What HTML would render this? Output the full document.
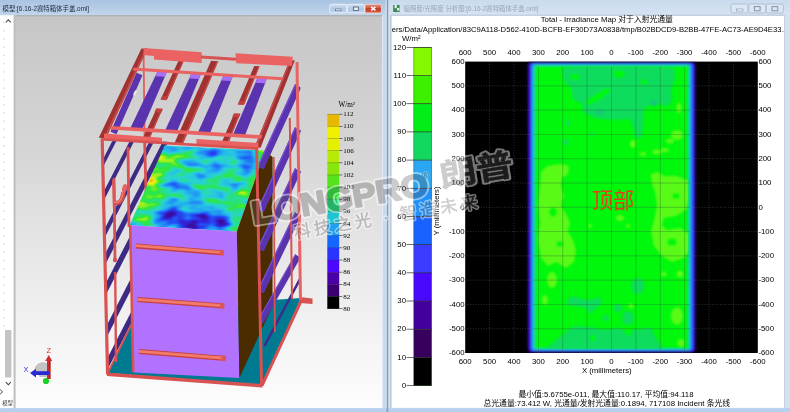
<!DOCTYPE html>
<html lang="zh"><head><meta charset="utf-8"><title>Irradiance Map</title>
<style>
html,body{margin:0;padding:0}
body{width:790px;height:412px;overflow:hidden;position:relative;background:#c3d8ee;font-family:"Liberation Sans", "Noto Sans CJK SC", sans-serif;}
#root{position:absolute;left:0;top:0;width:790px;height:412px;overflow:hidden;filter:blur(0.7px)}
svg{position:absolute;left:0;top:0}
.t{position:absolute;white-space:nowrap;color:#000;font-size:7.8px;line-height:10px;font-family:"Liberation Sans", "Noto Sans CJK SC", sans-serif}
.c{transform:translateX(-50%)}
.r{transform:translateX(-100%)}
</style></head><body><div id="root">

<svg width="790" height="412" viewBox="0 0 790 412">
<defs>
<linearGradient id="vpbg" x1="0" y1="0" x2="0" y2="1">
 <stop offset="0" stop-color="#c6c6c6"/><stop offset="0.35" stop-color="#d6d6d6"/><stop offset="0.7" stop-color="#ededed"/><stop offset="1" stop-color="#fdfdfd"/>
</linearGradient>
<linearGradient id="tbL" x1="0" y1="0" x2="0" y2="1">
 <stop offset="0" stop-color="#a9c3e2"/><stop offset="1" stop-color="#c2d6ec"/>
</linearGradient>
<linearGradient id="tbR" x1="0" y1="0" x2="0" y2="1">
 <stop offset="0" stop-color="#c9dbee"/><stop offset="1" stop-color="#d6e4f2"/>
</linearGradient>
<linearGradient id="redbtn" x1="0" y1="0" x2="0" y2="1">
 <stop offset="0" stop-color="#e59683"/><stop offset="0.45" stop-color="#d4553e"/><stop offset="0.5" stop-color="#c63a24"/><stop offset="1" stop-color="#d65c42"/>
</linearGradient>
<linearGradient id="bluebtn" x1="0" y1="0" x2="0" y2="1">
 <stop offset="0" stop-color="#d2e0f1"/><stop offset="0.5" stop-color="#b2c9e5"/><stop offset="1" stop-color="#bdd1ea"/>
</linearGradient>
<filter id="b1" x="-20%" y="-20%" width="140%" height="140%"><feGaussianBlur stdDeviation="1"/></filter>
<filter id="b2" x="-30%" y="-30%" width="160%" height="160%"><feGaussianBlur stdDeviation="2"/></filter>
<filter id="b3" x="-30%" y="-30%" width="160%" height="160%"><feGaussianBlur stdDeviation="3.2"/></filter>
<filter id="b07" x="-10%" y="-10%" width="120%" height="120%"><feGaussianBlur stdDeviation="0.8"/></filter>
<filter id="b05" x="-10%" y="-10%" width="120%" height="120%"><feGaussianBlur stdDeviation="0.45"/></filter>
</defs>
<rect x="0" y="0" width="387" height="412" fill="url(#tbL)"/>
<rect x="0" y="0" width="387" height="15.3" fill="url(#tbL)"/>
<rect x="0" y="15" width="387" height="397" fill="#c5d9ee"/>
<rect x="387" y="0" width="403" height="412" fill="#d3e2f1"/>
<rect x="387" y="0" width="403" height="15.3" fill="url(#tbR)"/>
<rect x="386.6" y="0" width="1.6" height="412" fill="#8499b3"/>
<rect x="385.6" y="0" width="1" height="412" fill="#d9e6f3"/>
<rect x="0" y="15.3" width="14" height="393" fill="#ffffff"/>
<rect x="13" y="15.3" width="2.6" height="393" fill="#b4b4b4"/><rect x="13" y="15.3" width="1.2" height="393" fill="#e4e4e4"/>
<rect x="15.6" y="15.3" width="366.6" height="393" fill="url(#vpbg)"/>
<rect x="15.6" y="15.3" width="366.6" height="1" fill="#9a9a9a" opacity="0.7"/>
<rect x="382.2" y="15.3" width="0.9" height="393" fill="#e8eef5"/>
<rect x="391.1" y="15.3" width="393.3" height="392.5" fill="#ffffff"/>
<rect x="390.6" y="15" width="0.8" height="393" fill="#8c9fb6" opacity="0.8"/>
<rect x="391.6" y="14.8" width="393" height="0.8" fill="#8c9fb6" opacity="0.7"/>
<rect x="784.2" y="15" width="0.8" height="393" fill="#b9c9da"/>
<rect x="0" y="408.2" width="790" height="4" fill="#b6d1ee"/>
<rect x="386.6" y="408.2" width="1.6" height="4" fill="#8499b3"/>
<clipPath id="vpclip"><rect x="15.6" y="15.3" width="366.6" height="393"/></clipPath>
<g clip-path="url(#vpclip)">
<polygon points="108.0,373.0 131.0,326.0 272.0,300.0 301.0,298.0 262.5,385.5" fill="#007a90" />
<polygon points="300.0,297.0 312.5,298.5 312.5,304.0 300.0,303.0" fill="#d85252" />
<clipPath id="leftwall"><polygon points="102,138 170,142 133,225 133,322 131,326 107.5,374"/></clipPath>
<g clip-path="url(#leftwall)">
<line x1="171.0" y1="30.6" x2="96.0" y2="176.8" stroke="#3c2a84" stroke-width="3.6" />
<line x1="171.0" y1="65.0" x2="96.0" y2="211.2" stroke="#3c2a84" stroke-width="4.0" />
<line x1="171.0" y1="103.9" x2="96.0" y2="250.2" stroke="#3c2a84" stroke-width="4.2" />
<line x1="171.0" y1="131.0" x2="96.0" y2="277.2" stroke="#3c2a84" stroke-width="5.0" />
<line x1="171.0" y1="162.0" x2="96.0" y2="308.2" stroke="#3c2a84" stroke-width="5.3" />
<line x1="171.0" y1="206.0" x2="96.0" y2="352.2" stroke="#3c2a84" stroke-width="5.3" />
<line x1="171.0" y1="240.0" x2="96.0" y2="386.2" stroke="#3c2a84" stroke-width="5.3" />
<line x1="171.0" y1="274.0" x2="96.0" y2="420.2" stroke="#3c2a84" stroke-width="5.3" />
</g>
<line x1="114.0" y1="178.0" x2="115.0" y2="260.0" stroke="#d85252" stroke-width="2.8" />
<circle cx="115" cy="260" r="2.2" fill="#d85252"/>
<line x1="115.2" y1="272.0" x2="116.0" y2="362.0" stroke="#d85252" stroke-width="2.4" />
<line x1="128.0" y1="147.0" x2="129.0" y2="227.0" stroke="#d85252" stroke-width="2.8" />
<line x1="143.6" y1="54.0" x2="144.6" y2="140.0" stroke="#e06060" stroke-width="1.8" />
<line x1="144.6" y1="140.0" x2="146.0" y2="192.0" stroke="#d85252" stroke-width="2.8" />
<line x1="113.6" y1="180.0" x2="114.4" y2="208.0" stroke="#dc5656" stroke-width="3.0" />
<path d="M114 203 L117.5 203 Q122.5 202 123.5 192" stroke="#d24c4c" stroke-width="4.6" fill="none"/>
<path d="M114 202.4 L117.5 202.4 Q121.8 201.4 122.8 192" stroke="#ee7a72" stroke-width="1.6" fill="none"/>
<ellipse cx="124.6" cy="188.4" rx="2.4" ry="4.4" fill="#e46464" transform="rotate(14 124.6 188.4)"/>
<line x1="107.5" y1="373.5" x2="131.0" y2="325.0" stroke="#d85252" stroke-width="1.8" />
<clipPath id="topface"><polygon points="164.6,145.6 265,150.6 236.8,231.6 129.6,225.2"/></clipPath>
<filter id="cmf" filterUnits="userSpaceOnUse" x="118" y="132" width="164" height="110" color-interpolation-filters="sRGB">
<feGaussianBlur in="SourceGraphic" stdDeviation="5" result="bias"/>
<feTurbulence type="fractalNoise" baseFrequency="0.05 0.11" numOctaves="2" seed="11" result="tn"/>
<feColorMatrix in="tn" type="matrix" values="1 0 0 0 0  1 0 0 0 0  1 0 0 0 0  0 0 0 0 1" result="noise"/>
<feComposite in="bias" in2="noise" operator="arithmetic" k1="0" k2="1" k3="0.8" k4="-0.4" result="v"/>
<feComponentTransfer in="v">
<feFuncR type="table" tableValues="0.22 0.19 0.13 0.13 0.14 0.16 0.16 0.19 0.56 0.94 0.94"/><feFuncG type="table" tableValues="0.06 0.16 0.35 0.56 0.72 0.83 0.88 0.91 0.94 0.94 0.69"/><feFuncB type="table" tableValues="0.63 0.88 0.97 0.96 0.93 0.82 0.5 0.22 0.13 0.09 0.06"/>
<feFuncA type="linear" slope="0" intercept="1"/>
</feComponentTransfer>
</filter>
<g clip-path="url(#topface)"><g filter="url(#cmf)">
<rect x="100" y="120" width="200" height="140" fill="#757575"/>
<ellipse cx="150" cy="188" rx="18" ry="44" fill="#adadad"/>
<ellipse cx="138" cy="214" rx="10" ry="10" fill="#b8b8b8"/>
<ellipse cx="172" cy="156" rx="18" ry="9" fill="#adadad"/>
<ellipse cx="160" cy="200" rx="14" ry="10" fill="#999999"/>
<ellipse cx="150" cy="182" rx="7" ry="6" fill="#e0e0e0"/>
<ellipse cx="156" cy="172" rx="6" ry="6" fill="#cccccc"/>
<ellipse cx="262" cy="168" rx="8" ry="22" fill="#b2b2b2"/>
<ellipse cx="248" cy="190" rx="10" ry="10" fill="#c7c7c7"/>
<ellipse cx="254" cy="200" rx="6" ry="12" fill="#a8a8a8"/>
<ellipse cx="243" cy="207" rx="8" ry="6" fill="#9e9e9e"/>
<ellipse cx="224" cy="153" rx="30" ry="4" fill="#3d3d3d"/>
<ellipse cx="202" cy="160" rx="16" ry="3" fill="#4c4c4c"/>
<ellipse cx="196" cy="220" rx="46" ry="8" fill="#1a1a1a"/>
<ellipse cx="205" cy="224" rx="30" ry="6" fill="#000000"/>
<ellipse cx="172" cy="215" rx="16" ry="5" fill="#292929"/>
<ellipse cx="215" cy="184" rx="14" ry="5" fill="#9e9e9e"/>
<ellipse cx="225" cy="203" rx="14" ry="5" fill="#9e9e9e"/>
<ellipse cx="190" cy="172" rx="10" ry="4" fill="#949494"/>
<ellipse cx="190" cy="196" rx="16" ry="4" fill="#616161"/>
<ellipse cx="228" cy="170" rx="12" ry="3" fill="#5c5c5c"/>
<ellipse cx="235" cy="223" rx="6" ry="7" fill="#b8b8b8"/>
<ellipse cx="241" cy="212" rx="5" ry="8" fill="#a8a8a8"/>
</g></g>
<polygon points="129.6,225.2 236.8,231.6 239.4,378.0 133.6,372.6" fill="#b172ff" />
<polygon points="236.8,231.6 265.0,151.0 272.6,157.0 272.6,306.0 239.4,378.0" fill="#4b2c00" />
<line x1="136.0" y1="246.0" x2="220.5" y2="252.7" stroke="#c44040" stroke-width="5.0" />
<line x1="136.0" y1="245.7" x2="220.5" y2="252.4" stroke="#f27a6a" stroke-width="2.8" />
<polygon points="219.5,249.7 223.9,250.0 223.9,255.7 219.5,255.4" fill="#dc5656" />
<line x1="137.5" y1="299.6" x2="221.0" y2="305.8" stroke="#c44040" stroke-width="5.0" />
<line x1="137.5" y1="299.3" x2="221.0" y2="305.5" stroke="#f27a6a" stroke-width="2.8" />
<polygon points="220.0,302.8 224.4,303.1 224.4,308.8 220.0,308.5" fill="#dc5656" />
<line x1="139.0" y1="351.6" x2="222.5" y2="358.3" stroke="#c44040" stroke-width="5.0" />
<line x1="139.0" y1="351.3" x2="222.5" y2="358.0" stroke="#f27a6a" stroke-width="2.8" />
<polygon points="221.5,355.3 225.9,355.6 225.9,361.3 221.5,361.0" fill="#dc5656" />
<line x1="130.2" y1="225.0" x2="133.2" y2="372.0" stroke="#d85252" stroke-width="2.6" />
<clipPath id="rwall"><polygon points="258,100 300,55 303,300 262,386"/></clipPath>
<g clip-path="url(#rwall)">
<line x1="298.0" y1="86.0" x2="260.5" y2="168.0" stroke="#5a34ae" stroke-width="7.0" />
<line x1="295.6" y1="84.2" x2="258.1" y2="166.2" stroke="#7a50d0" stroke-width="1.2" />
<line x1="298.0" y1="129.0" x2="260.5" y2="211.0" stroke="#5a34ae" stroke-width="7.0" />
<line x1="295.6" y1="127.2" x2="258.1" y2="209.2" stroke="#7a50d0" stroke-width="1.2" />
<line x1="298.0" y1="170.0" x2="260.5" y2="250.0" stroke="#5a34ae" stroke-width="7.0" />
<line x1="295.6" y1="168.2" x2="258.1" y2="248.2" stroke="#7a50d0" stroke-width="1.2" />
<line x1="298.0" y1="214.0" x2="260.5" y2="292.0" stroke="#5a34ae" stroke-width="7.0" />
<line x1="295.6" y1="212.2" x2="258.1" y2="290.2" stroke="#7a50d0" stroke-width="1.2" />
<line x1="298.0" y1="256.0" x2="260.5" y2="322.0" stroke="#5a34ae" stroke-width="6.0" />
<line x1="295.6" y1="254.2" x2="258.1" y2="320.2" stroke="#7a50d0" stroke-width="1.2" />
<line x1="300.0" y1="279.0" x2="264.5" y2="346.0" stroke="#3f2c8c" stroke-width="2.6" />
</g>
<line x1="297.0" y1="62.0" x2="300.5" y2="300.0" stroke="#e86464" stroke-width="3" />
<line x1="289.8" y1="118.0" x2="292.0" y2="299.0" stroke="#d85252" stroke-width="2" />
<line x1="273.8" y1="157.0" x2="274.8" y2="332.0" stroke="#d85252" stroke-width="1.8" />
<line x1="102.2" y1="139.0" x2="107.6" y2="374.5" stroke="#d85252" stroke-width="3.2" />
<line x1="256.6" y1="148.0" x2="261.6" y2="385.5" stroke="#d85252" stroke-width="3" />
<line x1="107.0" y1="374.3" x2="262.5" y2="385.8" stroke="#d85252" stroke-width="3.4" />
<line x1="262.0" y1="385.6" x2="301.5" y2="300.0" stroke="#d85252" stroke-width="3" />
<line x1="139.5" y1="74.0" x2="113.5" y2="133.0" stroke="#5a34ae" stroke-width="6.5" />
<ellipse cx="135" cy="93" rx="1.2" ry="3" fill="#e8e8e8" transform="rotate(24 135 93)"/>
<polygon points="158.1,70.2 167.4,70.8 141.9,129.9 129.8,129.2" fill="#5a34ae" />
<polygon points="158.1,70.2 167.4,70.8 164.8,76.8 155.2,76.2" fill="#a870f8" />
<polygon points="192.0,72.4 201.4,73.0 176.8,132.0 164.7,131.3" fill="#5a34ae" />
<polygon points="192.0,72.4 201.4,73.0 198.9,79.0 189.3,78.4" fill="#a870f8" />
<polygon points="224.0,74.5 233.4,75.1 209.7,134.1 197.6,133.3" fill="#5a34ae" />
<polygon points="224.0,74.5 233.4,75.1 231.0,81.1 221.3,80.5" fill="#a870f8" />
<polygon points="258.0,76.8 267.3,77.4 244.7,136.2 232.6,135.5" fill="#5a34ae" />
<polygon points="258.0,76.8 267.3,77.4 265.0,83.3 255.4,82.7" fill="#a870f8" />
<polygon points="178.4,61.0 183.5,61.3 167.1,98.9 161.0,98.5" fill="#a03232" />
<polygon points="182.6,61.2 183.8,61.3 167.1,98.9 165.6,98.8" fill="#c84848" />
<polygon points="155.9,110.1 161.8,110.5 150.2,137.3 143.4,136.9" fill="#a03232" />
<polygon points="160.7,110.4 161.9,110.5 150.1,137.3 148.5,137.2" fill="#c84848" />
<polygon points="162.2,95.8 168.3,96.2 166.5,100.2 160.4,99.8" fill="#c04040" />
<polygon points="156.3,108.3 163.0,108.7 161.2,112.7 154.4,112.3" fill="#c04040" />
<polygon points="254.2,66.0 259.4,66.3 244.4,103.8 238.2,103.4" fill="#a03232" />
<polygon points="258.5,66.3 259.7,66.3 244.4,103.8 242.8,103.7" fill="#c84848" />
<polygon points="233.6,115.0 239.4,115.3 228.9,142.1 222.0,141.7" fill="#a03232" />
<polygon points="238.4,115.3 239.6,115.4 228.7,142.1 227.1,142.0" fill="#c84848" />
<polygon points="239.4,100.7 245.5,101.1 243.8,105.1 237.7,104.7" fill="#c04040" />
<polygon points="233.9,113.2 240.6,113.6 239.0,117.6 232.2,117.2" fill="#c04040" />
<polygon points="211.1,60.8 218.0,61.3 182.5,144.8 174.0,144.3" fill="#a03232" />
<polygon points="216.9,61.2 218.4,61.3 182.5,144.8 180.6,144.6" fill="#c84848" />
<polygon points="141.4,48.4 147.4,48.8 106.0,138.3 98.8,137.8" fill="#a03232" />
<polygon points="145.7,48.6 147.2,48.8 105.6,138.2 103.7,138.1" fill="#cc4c4c" />
<polygon points="289.7,60.1 294.8,60.4 260.5,147.7 254.5,147.3" fill="#a03232" />
<polygon points="289.9,60.1 291.1,60.2 256.4,147.4 254.8,147.3" fill="#cc4c4c" />
<polygon points="133.8,67.5 283.2,77.3 282.0,80.2 132.5,70.4" fill="#ea6262" />
<polygon points="111.9,125.9 262.4,135.2 261.0,138.8 110.3,129.5" fill="#ea6262" />
<polygon points="143.5,48.0 201.7,52.2 201.7,63.0 154.0,59.6 154.0,56.0 143.5,55.0" fill="#ea6262" />
<polygon points="235.5,53.2 292.8,56.8 292.0,66.0 236.2,63.2" fill="#ea6262" />
<line x1="201.0" y1="57.0" x2="236.0" y2="59.2" stroke="#d85252" stroke-width="3" />
<polygon points="104.0,133.6 162.0,137.8 162.0,143.0 104.0,140.2" fill="#ea6262" />
<polygon points="196.5,139.0 258.5,143.0 258.5,149.6 196.5,145.6" fill="#ea6262" />
<line x1="101.0" y1="139.3" x2="258.0" y2="148.6" stroke="#d85252" stroke-width="2.6" />
</g>
<rect x="327.3" y="114.20" width="11.9" height="12.45" fill="#e8b800"/>
<rect x="327.3" y="126.35" width="11.9" height="12.45" fill="#f0f000"/>
<rect x="327.3" y="138.50" width="11.9" height="12.45" fill="#e4f000"/>
<rect x="327.3" y="150.65" width="11.9" height="12.45" fill="#b8ea08"/>
<rect x="327.3" y="162.80" width="11.9" height="12.45" fill="#88e60c"/>
<rect x="327.3" y="174.95" width="11.9" height="12.45" fill="#54e41c"/>
<rect x="327.3" y="187.10" width="11.9" height="12.45" fill="#22e22e"/>
<rect x="327.3" y="199.25" width="11.9" height="12.45" fill="#14d66e"/>
<rect x="327.3" y="211.40" width="11.9" height="12.45" fill="#20c4d0"/>
<rect x="327.3" y="223.55" width="11.9" height="12.45" fill="#22a0f0"/>
<rect x="327.3" y="235.70" width="11.9" height="12.45" fill="#1466ff"/>
<rect x="327.3" y="247.85" width="11.9" height="12.45" fill="#2a34ff"/>
<rect x="327.3" y="260.00" width="11.9" height="12.45" fill="#4c08ff"/>
<rect x="327.3" y="272.15" width="11.9" height="12.45" fill="#4a00a8"/>
<rect x="327.3" y="284.30" width="11.9" height="12.45" fill="#3a0070"/>
<rect x="327.3" y="296.45" width="11.9" height="12.45" fill="#000000"/>
<rect x="327.3" y="113.90" width="11.9" height="0.6" fill="#333" opacity="0.45"/>
<rect x="339.2" y="113.90" width="3.2" height="0.6" fill="#222"/>
<rect x="327.3" y="126.05" width="11.9" height="0.6" fill="#333" opacity="0.45"/>
<rect x="339.2" y="126.05" width="3.2" height="0.6" fill="#222"/>
<rect x="327.3" y="138.20" width="11.9" height="0.6" fill="#333" opacity="0.45"/>
<rect x="339.2" y="138.20" width="3.2" height="0.6" fill="#222"/>
<rect x="327.3" y="150.35" width="11.9" height="0.6" fill="#333" opacity="0.45"/>
<rect x="339.2" y="150.35" width="3.2" height="0.6" fill="#222"/>
<rect x="327.3" y="162.50" width="11.9" height="0.6" fill="#333" opacity="0.45"/>
<rect x="339.2" y="162.50" width="3.2" height="0.6" fill="#222"/>
<rect x="327.3" y="174.65" width="11.9" height="0.6" fill="#333" opacity="0.45"/>
<rect x="339.2" y="174.65" width="3.2" height="0.6" fill="#222"/>
<rect x="327.3" y="186.80" width="11.9" height="0.6" fill="#333" opacity="0.45"/>
<rect x="339.2" y="186.80" width="3.2" height="0.6" fill="#222"/>
<rect x="327.3" y="198.95" width="11.9" height="0.6" fill="#333" opacity="0.45"/>
<rect x="339.2" y="198.95" width="3.2" height="0.6" fill="#222"/>
<rect x="327.3" y="211.10" width="11.9" height="0.6" fill="#333" opacity="0.45"/>
<rect x="339.2" y="211.10" width="3.2" height="0.6" fill="#222"/>
<rect x="327.3" y="223.25" width="11.9" height="0.6" fill="#333" opacity="0.45"/>
<rect x="339.2" y="223.25" width="3.2" height="0.6" fill="#222"/>
<rect x="327.3" y="235.40" width="11.9" height="0.6" fill="#333" opacity="0.45"/>
<rect x="339.2" y="235.40" width="3.2" height="0.6" fill="#222"/>
<rect x="327.3" y="247.55" width="11.9" height="0.6" fill="#333" opacity="0.45"/>
<rect x="339.2" y="247.55" width="3.2" height="0.6" fill="#222"/>
<rect x="327.3" y="259.70" width="11.9" height="0.6" fill="#333" opacity="0.45"/>
<rect x="339.2" y="259.70" width="3.2" height="0.6" fill="#222"/>
<rect x="327.3" y="271.85" width="11.9" height="0.6" fill="#333" opacity="0.45"/>
<rect x="339.2" y="271.85" width="3.2" height="0.6" fill="#222"/>
<rect x="327.3" y="284.00" width="11.9" height="0.6" fill="#333" opacity="0.45"/>
<rect x="339.2" y="284.00" width="3.2" height="0.6" fill="#222"/>
<rect x="327.3" y="296.15" width="11.9" height="0.6" fill="#333" opacity="0.45"/>
<rect x="339.2" y="296.15" width="3.2" height="0.6" fill="#222"/>
<rect x="327.3" y="308.30" width="11.9" height="0.6" fill="#333" opacity="0.45"/>
<rect x="339.2" y="308.30" width="3.2" height="0.6" fill="#222"/>
<rect x="413.8" y="47.40" width="17.8" height="28.48" fill="#84f800"/>
<rect x="413.8" y="75.58" width="17.8" height="28.48" fill="#3cf000"/>
<rect x="413.8" y="103.77" width="17.8" height="28.48" fill="#02ee18"/>
<rect x="413.8" y="131.95" width="17.8" height="28.48" fill="#12d860"/>
<rect x="413.8" y="160.13" width="17.8" height="28.48" fill="#2aa6f2"/>
<rect x="413.8" y="188.32" width="17.8" height="28.48" fill="#2090f8"/>
<rect x="413.8" y="216.50" width="17.8" height="28.48" fill="#1a62ff"/>
<rect x="413.8" y="244.68" width="17.8" height="28.48" fill="#3a3cff"/>
<rect x="413.8" y="272.87" width="17.8" height="28.48" fill="#4a08ff"/>
<rect x="413.8" y="301.05" width="17.8" height="28.48" fill="#42009c"/>
<rect x="413.8" y="329.23" width="17.8" height="28.48" fill="#36005c"/>
<rect x="413.8" y="357.42" width="17.8" height="28.48" fill="#000000"/>
<rect x="406.6" y="47.00" width="25.0" height="0.7" fill="#333"/>
<rect x="406.6" y="75.18" width="25.0" height="0.7" fill="#333"/>
<rect x="406.6" y="103.37" width="25.0" height="0.7" fill="#333"/>
<rect x="406.6" y="131.55" width="25.0" height="0.7" fill="#333"/>
<rect x="406.6" y="159.73" width="25.0" height="0.7" fill="#333"/>
<rect x="406.6" y="187.92" width="25.0" height="0.7" fill="#333"/>
<rect x="406.6" y="216.10" width="25.0" height="0.7" fill="#333"/>
<rect x="406.6" y="244.28" width="25.0" height="0.7" fill="#333"/>
<rect x="406.6" y="272.47" width="25.0" height="0.7" fill="#333"/>
<rect x="406.6" y="300.65" width="25.0" height="0.7" fill="#333"/>
<rect x="406.6" y="328.83" width="25.0" height="0.7" fill="#333"/>
<rect x="406.6" y="357.02" width="25.0" height="0.7" fill="#333"/>
<rect x="406.6" y="385.20" width="25.0" height="0.7" fill="#333"/>
<rect x="413.8" y="47.4" width="17.8" height="338.2" fill="none" stroke="#1a3a10" stroke-width="0.6" opacity="0.7"/>
<rect x="465.2" y="61.6" width="292.6" height="291.4" fill="#000"/>
<clipPath id="plotclip"><rect x="465.2" y="61.6" width="292.6" height="291.4"/></clipPath>
<g clip-path="url(#plotclip)">
<g filter="url(#b1)">
<rect x="527.2" y="61.8" width="169.0" height="290.8" rx="4.0" fill="#1e0040"/>
<rect x="528.4" y="62.4" width="166.6" height="289.6" rx="3.5" fill="#4000b0"/>
<rect x="529.6" y="63.0" width="164.2" height="288.4" rx="3.0" fill="#3818f8"/>
<rect x="530.8" y="63.6" width="161.8" height="287.2" rx="2.6" fill="#2060ff"/>
<rect x="532.0" y="64.2" width="159.4" height="286.0" rx="2.1" fill="#20a0f8"/>
<rect x="533.2" y="64.8" width="157.0" height="284.8" rx="1.6" fill="#18c8c0"/>
<rect x="534.4" y="65.4" width="154.6" height="283.6" rx="1.1" fill="#10e050"/>
<rect x="535.6" y="66.0" width="152.2" height="282.4" rx="1.0" fill="#00f808"/>
</g>
<clipPath id="gclip"><rect x="535.2" y="66.3" width="153.0" height="282.3" rx="2"/></clipPath>
<g clip-path="url(#gclip)" filter="url(#b07)">
<polygon points="562,69 575,66 612,66 640,66 674,68 675,80 671,88 672,100 668,106 655,104 644,108 643,120 642,136 636,139 633,126 630,119 612,120 595,118 584,113 582,104 573,99 571,88 565,82" fill="#0cdc5c"/>
<ellipse cx="619" cy="74" rx="6" ry="4" fill="#00f808"/>
<ellipse cx="644" cy="82" rx="3" ry="3" fill="#00f808"/>
<ellipse cx="575" cy="77" rx="5" ry="3" fill="#00f808"/>
<polygon points="585,103 590,98 598,93 606,88 611,90 606,95 598,101 589,105" fill="#00f808"/>
<ellipse cx="654" cy="103" rx="3" ry="3" fill="#14c67a"/>
<ellipse cx="600" cy="112" rx="4" ry="2.5" fill="#14c67a"/>
<ellipse cx="568" cy="123" rx="2" ry="3" fill="#0cdc5c"/>
<ellipse cx="566" cy="142" rx="2.5" ry="3" fill="#0cdc5c"/>
<ellipse cx="592" cy="134" rx="2" ry="2" fill="#0cdc5c"/>
<ellipse cx="679" cy="108" rx="2.5" ry="5" fill="#58fa14"/>
<ellipse cx="677" cy="135" rx="6" ry="5" fill="#58fa14"/>
<ellipse cx="670" cy="141" rx="4" ry="2.5" fill="#58fa14"/>
<ellipse cx="633" cy="144" rx="3" ry="4" fill="#58fa14"/>
<ellipse cx="657" cy="152" rx="5" ry="2.5" fill="#58fa14"/>
<ellipse cx="643" cy="154" rx="3" ry="2" fill="#58fa14"/>
<ellipse cx="665" cy="150" rx="4" ry="2" fill="#58fa14"/>
<polygon points="541,172 547,166 560,164 569,166 568,174 562,178 561,186 564,196 561,206 566,214 570,222 568,232 573,240 576,250 574,262 566,268 556,262 548,266 541,258 538,240 540,222 538,204 540,188" fill="#58fa14"/>
<ellipse cx="552" cy="280" rx="5" ry="8" fill="#58fa14"/>
<ellipse cx="545" cy="300" rx="3" ry="5" fill="#58fa14"/>
<ellipse cx="553" cy="212" rx="4" ry="5" fill="#00f808"/>
<ellipse cx="560" cy="244" rx="4" ry="3" fill="#00f808"/>
<polygon points="651,174 658,172 664,176 676,176 688,180 690,196 686,210 676,216 664,218 662,226 668,230 680,228 690,234 690,250 684,258 672,262 662,256 654,246 651,232 654,220 657,206 655,192 652,184" fill="#58fa14"/>
<ellipse cx="676" cy="196" rx="4" ry="3" fill="#00f808"/>
<ellipse cx="672" cy="242" rx="5" ry="4" fill="#00f808"/>
<ellipse cx="620" cy="218" rx="4" ry="3" fill="#58fa14"/>
<ellipse cx="628" cy="226" rx="2" ry="2" fill="#58fa14"/>
<ellipse cx="590" cy="226" rx="2" ry="2" fill="#58fa14"/>
<ellipse cx="680" cy="274" rx="3.5" ry="3.5" fill="#58fa14"/>
<ellipse cx="664" cy="274" rx="2.5" ry="2.5" fill="#58fa14"/>
<ellipse cx="677" cy="316" rx="6" ry="9" fill="#58fa14"/>
<ellipse cx="681" cy="343" rx="3.5" ry="4" fill="#58fa14"/>
<ellipse cx="631" cy="306" rx="2.5" ry="2.5" fill="#58fa14"/>
<polygon points="545,349 556,340 566,332 574,326 590,327 604,330 618,328 628,331 640,329 651,328 656,338 663,349" fill="#0cdc5c"/>
<polygon points="567,300 574,296 584,300 594,299 600,297 602,304 596,308 590,314 586,308 576,306 569,306" fill="#0cdc5c"/>
<ellipse cx="638" cy="286" rx="6.5" ry="8" fill="#0cdc5c"/>
<ellipse cx="618" cy="308" rx="4" ry="4" fill="#0cdc5c"/>
<ellipse cx="628" cy="318" rx="6" ry="7" fill="#0cdc5c"/>
<ellipse cx="606" cy="318" rx="3" ry="3" fill="#0cdc5c"/>
<ellipse cx="628" cy="332" rx="3.5" ry="3.5" fill="#00f808"/>
<ellipse cx="593" cy="338" rx="3" ry="3" fill="#00f808"/>
</g>
<line x1="733.42" y1="61.6" x2="733.42" y2="353.0" stroke="#8a8a8a" stroke-width="0.7" stroke-dasharray="1 1.6" opacity="0.5"/>
<line x1="465.2" y1="328.72" x2="757.8" y2="328.72" stroke="#8a8a8a" stroke-width="0.7" stroke-dasharray="1 1.6" opacity="0.5"/>
<line x1="709.03" y1="61.6" x2="709.03" y2="353.0" stroke="#8a8a8a" stroke-width="0.7" stroke-dasharray="1 1.6" opacity="0.5"/>
<line x1="465.2" y1="304.43" x2="757.8" y2="304.43" stroke="#8a8a8a" stroke-width="0.7" stroke-dasharray="1 1.6" opacity="0.5"/>
<line x1="684.65" y1="61.6" x2="684.65" y2="353.0" stroke="#8a8a8a" stroke-width="0.7" stroke-dasharray="1 1.6" opacity="0.5"/>
<line x1="465.2" y1="280.15" x2="757.8" y2="280.15" stroke="#8a8a8a" stroke-width="0.7" stroke-dasharray="1 1.6" opacity="0.5"/>
<line x1="660.27" y1="61.6" x2="660.27" y2="353.0" stroke="#8a8a8a" stroke-width="0.7" stroke-dasharray="1 1.6" opacity="0.5"/>
<line x1="465.2" y1="255.87" x2="757.8" y2="255.87" stroke="#8a8a8a" stroke-width="0.7" stroke-dasharray="1 1.6" opacity="0.5"/>
<line x1="635.88" y1="61.6" x2="635.88" y2="353.0" stroke="#8a8a8a" stroke-width="0.7" stroke-dasharray="1 1.6" opacity="0.5"/>
<line x1="465.2" y1="231.58" x2="757.8" y2="231.58" stroke="#8a8a8a" stroke-width="0.7" stroke-dasharray="1 1.6" opacity="0.5"/>
<line x1="611.50" y1="61.6" x2="611.50" y2="353.0" stroke="#8a8a8a" stroke-width="0.7" stroke-dasharray="1 1.6" opacity="0.5"/>
<line x1="465.2" y1="207.30" x2="757.8" y2="207.30" stroke="#8a8a8a" stroke-width="0.7" stroke-dasharray="1 1.6" opacity="0.5"/>
<line x1="587.12" y1="61.6" x2="587.12" y2="353.0" stroke="#8a8a8a" stroke-width="0.7" stroke-dasharray="1 1.6" opacity="0.5"/>
<line x1="465.2" y1="183.02" x2="757.8" y2="183.02" stroke="#8a8a8a" stroke-width="0.7" stroke-dasharray="1 1.6" opacity="0.5"/>
<line x1="562.73" y1="61.6" x2="562.73" y2="353.0" stroke="#8a8a8a" stroke-width="0.7" stroke-dasharray="1 1.6" opacity="0.5"/>
<line x1="465.2" y1="158.73" x2="757.8" y2="158.73" stroke="#8a8a8a" stroke-width="0.7" stroke-dasharray="1 1.6" opacity="0.5"/>
<line x1="538.35" y1="61.6" x2="538.35" y2="353.0" stroke="#8a8a8a" stroke-width="0.7" stroke-dasharray="1 1.6" opacity="0.5"/>
<line x1="465.2" y1="134.45" x2="757.8" y2="134.45" stroke="#8a8a8a" stroke-width="0.7" stroke-dasharray="1 1.6" opacity="0.5"/>
<line x1="513.97" y1="61.6" x2="513.97" y2="353.0" stroke="#8a8a8a" stroke-width="0.7" stroke-dasharray="1 1.6" opacity="0.5"/>
<line x1="465.2" y1="110.17" x2="757.8" y2="110.17" stroke="#8a8a8a" stroke-width="0.7" stroke-dasharray="1 1.6" opacity="0.5"/>
<line x1="489.58" y1="61.6" x2="489.58" y2="353.0" stroke="#8a8a8a" stroke-width="0.7" stroke-dasharray="1 1.6" opacity="0.5"/>
<line x1="465.2" y1="85.88" x2="757.8" y2="85.88" stroke="#8a8a8a" stroke-width="0.7" stroke-dasharray="1 1.6" opacity="0.5"/>
<line x1="684.65" y1="66.8" x2="684.65" y2="352.6" stroke="#0a5a14" stroke-width="0.7" opacity="0.36"/>
<line x1="660.27" y1="66.8" x2="660.27" y2="352.6" stroke="#0a5a14" stroke-width="0.7" opacity="0.36"/>
<line x1="635.88" y1="66.8" x2="635.88" y2="352.6" stroke="#0a5a14" stroke-width="0.7" opacity="0.36"/>
<line x1="611.50" y1="66.8" x2="611.50" y2="352.6" stroke="#0a5a14" stroke-width="0.7" opacity="0.36"/>
<line x1="587.12" y1="66.8" x2="587.12" y2="352.6" stroke="#0a5a14" stroke-width="0.7" opacity="0.36"/>
<line x1="562.73" y1="66.8" x2="562.73" y2="352.6" stroke="#0a5a14" stroke-width="0.7" opacity="0.36"/>
<line x1="538.35" y1="66.8" x2="538.35" y2="352.6" stroke="#0a5a14" stroke-width="0.7" opacity="0.36"/>
<line x1="533.2" y1="328.72" x2="690.2" y2="328.72" stroke="#0a5a14" stroke-width="0.7" opacity="0.36"/>
<line x1="533.2" y1="304.43" x2="690.2" y2="304.43" stroke="#0a5a14" stroke-width="0.7" opacity="0.36"/>
<line x1="533.2" y1="280.15" x2="690.2" y2="280.15" stroke="#0a5a14" stroke-width="0.7" opacity="0.36"/>
<line x1="533.2" y1="255.87" x2="690.2" y2="255.87" stroke="#0a5a14" stroke-width="0.7" opacity="0.36"/>
<line x1="533.2" y1="231.58" x2="690.2" y2="231.58" stroke="#0a5a14" stroke-width="0.7" opacity="0.36"/>
<line x1="533.2" y1="207.30" x2="690.2" y2="207.30" stroke="#0a5a14" stroke-width="0.7" opacity="0.36"/>
<line x1="533.2" y1="183.02" x2="690.2" y2="183.02" stroke="#0a5a14" stroke-width="0.7" opacity="0.36"/>
<line x1="533.2" y1="158.73" x2="690.2" y2="158.73" stroke="#0a5a14" stroke-width="0.7" opacity="0.36"/>
<line x1="533.2" y1="134.45" x2="690.2" y2="134.45" stroke="#0a5a14" stroke-width="0.7" opacity="0.36"/>
<line x1="533.2" y1="110.17" x2="690.2" y2="110.17" stroke="#0a5a14" stroke-width="0.7" opacity="0.36"/>
<line x1="533.2" y1="85.88" x2="690.2" y2="85.88" stroke="#0a5a14" stroke-width="0.7" opacity="0.36"/>
</g>
<rect x="329.8" y="4.3" width="17" height="8.6" rx="1.5" fill="url(#bluebtn)" stroke="#f2f7fc" stroke-width="0.8"/>
<rect x="347.4" y="4.3" width="17" height="8.6" rx="1.5" fill="url(#bluebtn)" stroke="#f2f7fc" stroke-width="0.8"/>
<rect x="365" y="4.3" width="16.4" height="8.6" rx="1.5" fill="url(#redbtn)" stroke="#f6d9d2" stroke-width="0.8"/>
<rect x="335.4" y="9" width="5.6" height="1.8" fill="#f8fbff" stroke="#56657a" stroke-width="0.6"/>
<rect x="353.4" y="7" width="5" height="3.4" fill="#e8f0f8" stroke="#56657a" stroke-width="0.9"/>
<path d="M371.2 6.9 L375.4 10.4 M375.4 6.9 L371.2 10.4" stroke="#ffffff" stroke-width="1.5" fill="none"/>
<rect x="731" y="4" width="17" height="9" rx="1.5" fill="#dbe7f4" stroke="#a9b6c6" stroke-width="0.8"/>
<rect x="748.7" y="4" width="17" height="9" rx="1.5" fill="#dbe7f4" stroke="#a9b6c6" stroke-width="0.8"/>
<rect x="766.3" y="4" width="17" height="9" rx="1.5" fill="#dbe7f4" stroke="#a9b6c6" stroke-width="0.8"/>
<rect x="736.5" y="9" width="6.5" height="2" fill="#f8fbff" stroke="#8490a0" stroke-width="0.6"/>
<rect x="754.3" y="6.6" width="5.8" height="4.2" fill="none" stroke="#8490a0" stroke-width="1"/>
<rect x="772" y="6.6" width="5.8" height="4.2" fill="none" stroke="#8490a0" stroke-width="1"/>
<rect x="393.2" y="5" width="6.4" height="7" fill="#3a8a52"/>
<rect x="394.6" y="5" width="2.2" height="3.2" fill="#e8f2ee"/>
<rect x="397" y="8" width="2.4" height="2.6" fill="#dfe8f2"/>
<rect x="5" y="330" width="6.4" height="47.4" rx="1" fill="#c4c4c4"/>
<path d="M5.8 22.4 L8.3 19.8 L10.8 22.4" stroke="#555" stroke-width="1.1" fill="none"/>
<path d="M5.8 382.2 L8.3 384.8 L10.8 382.2" stroke="#444" stroke-width="1.1" fill="none"/>
<path d="M0.2 389.6 L2.6 391.8 L0.2 394" stroke="#444" stroke-width="1" fill="none"/>
<rect x="3" y="22.0" width="1.3" height="1.3" fill="#7fd48a" opacity="0.6"/>
<rect x="3" y="30.2" width="1.3" height="1.3" fill="#7fd48a" opacity="0.6"/>
<rect x="3" y="38.4" width="1.3" height="1.3" fill="#7fd48a" opacity="0.6"/>
<rect x="3" y="46.6" width="1.3" height="1.3" fill="#7fd48a" opacity="0.6"/>
<rect x="3" y="54.8" width="1.3" height="1.3" fill="#7fd48a" opacity="0.6"/>
<rect x="3" y="63.0" width="1.3" height="1.3" fill="#7fd48a" opacity="0.6"/>
<rect x="3" y="71.2" width="1.3" height="1.3" fill="#7fd48a" opacity="0.6"/>
<rect x="3" y="79.4" width="1.3" height="1.3" fill="#7fd48a" opacity="0.6"/>
<rect x="3" y="87.6" width="1.3" height="1.3" fill="#7fd48a" opacity="0.6"/>
<rect x="3" y="95.8" width="1.3" height="1.3" fill="#7fd48a" opacity="0.6"/>
<rect x="3" y="104.0" width="1.3" height="1.3" fill="#7fd48a" opacity="0.6"/>
<rect x="3" y="112.2" width="1.3" height="1.3" fill="#7fd48a" opacity="0.6"/>
<rect x="3" y="120.4" width="1.3" height="1.3" fill="#7fd48a" opacity="0.6"/>
<rect x="3" y="128.6" width="1.3" height="1.3" fill="#7fd48a" opacity="0.6"/>
<rect x="3" y="136.8" width="1.3" height="1.3" fill="#7fd48a" opacity="0.6"/>
<rect x="3" y="145.0" width="1.3" height="1.3" fill="#7fd48a" opacity="0.6"/>
<rect x="3" y="153.2" width="1.3" height="1.3" fill="#7fd48a" opacity="0.6"/>
<rect x="3" y="161.4" width="1.3" height="1.3" fill="#7fd48a" opacity="0.6"/>
<rect x="3" y="169.6" width="1.3" height="1.3" fill="#7fd48a" opacity="0.6"/>
<rect x="3" y="177.8" width="1.3" height="1.3" fill="#7fd48a" opacity="0.6"/>
<rect x="3" y="186.0" width="1.3" height="1.3" fill="#7fd48a" opacity="0.6"/>
<rect x="3" y="194.2" width="1.3" height="1.3" fill="#7fd48a" opacity="0.6"/>
<rect x="3" y="202.4" width="1.3" height="1.3" fill="#7fd48a" opacity="0.6"/>
<rect x="3" y="210.6" width="1.3" height="1.3" fill="#7fd48a" opacity="0.6"/>
<rect x="3" y="218.8" width="1.3" height="1.3" fill="#7fd48a" opacity="0.6"/>
<rect x="3" y="227.0" width="1.3" height="1.3" fill="#7fd48a" opacity="0.6"/>
<rect x="3" y="235.2" width="1.3" height="1.3" fill="#7fd48a" opacity="0.6"/>
<rect x="3" y="243.4" width="1.3" height="1.3" fill="#7fd48a" opacity="0.6"/>
<rect x="3" y="251.6" width="1.3" height="1.3" fill="#7fd48a" opacity="0.6"/>
<rect x="3" y="259.8" width="1.3" height="1.3" fill="#7fd48a" opacity="0.6"/>
<rect x="3" y="268.0" width="1.3" height="1.3" fill="#7fd48a" opacity="0.6"/>
<rect x="3" y="276.2" width="1.3" height="1.3" fill="#7fd48a" opacity="0.6"/>
<rect x="3" y="284.4" width="1.3" height="1.3" fill="#7fd48a" opacity="0.6"/>
<rect x="3" y="292.6" width="1.3" height="1.3" fill="#7fd48a" opacity="0.6"/>
<rect x="3" y="300.8" width="1.3" height="1.3" fill="#7fd48a" opacity="0.6"/>
<rect x="3" y="309.0" width="1.3" height="1.3" fill="#7fd48a" opacity="0.6"/>
<rect x="3" y="317.2" width="1.3" height="1.3" fill="#7fd48a" opacity="0.6"/>
<rect x="3" y="325.4" width="1.3" height="1.3" fill="#7fd48a" opacity="0.6"/>
<path d="M34.5 369.5 A8.5 8.5 0 0 1 50 366 L50 377 L40 377 Z" fill="#bdbdbd" opacity="0.9"/>
<circle cx="46" cy="381" r="3.1" fill="#19d21f"/>
<rect x="47" y="359" width="3.4" height="20" fill="#d22a2a"/><rect x="49.4" y="359" width="1" height="20" fill="#9c1c1c"/>
<polygon points="45.2,361 48.7,355 52.2,361" fill="#d22a2a"/>
<rect x="34" y="371.2" width="15" height="3.8" fill="#2a2ad2"/>
<polygon points="36,368.8 30,373.1 36,377.4" fill="#2a2ad2"/>
</svg>
<div class="t " style="left:2.5px;top:3.6px;font-size:6.4px;color:#1c2a3c">模型:[6.16-2赛特箱体手盖.oml]</div>
<div class="t " style="left:403.5px;top:3.6px;font-size:6.4px;color:#98a7b8">辐照度/光照度 分析图:[6.16-2赛特箱体手盖.oml]</div>
<div class="t " style="left:2.2px;top:398.3px;font-size:5.4px;color:#333">模型</div>
<div class="t c" style="left:606.8px;top:15.3px;">Total - Irradiance Map 对于入射光通量</div>
<div class="t" style="left:391.8px;top:24.6px;width:392.2px;overflow:hidden;font-size:7.66px">ers/Data/Application/83C9A118-D562-410D-BCFB-EF30D73A0838/tmp/B02BDCD9-B2BB-47FE-AC73-AE9D4E33…</div>
<div class="t " style="left:402.0px;top:34.2px;">W/m²</div>
<div class="t r" style="left:406.0px;top:42.6px;">120</div>
<div class="t r" style="left:406.0px;top:70.8px;">110</div>
<div class="t r" style="left:406.0px;top:99.0px;">100</div>
<div class="t r" style="left:406.0px;top:127.2px;">90</div>
<div class="t r" style="left:406.0px;top:155.3px;">80</div>
<div class="t r" style="left:406.0px;top:183.5px;">70</div>
<div class="t r" style="left:406.0px;top:211.7px;">60</div>
<div class="t r" style="left:406.0px;top:239.9px;">50</div>
<div class="t r" style="left:406.0px;top:268.1px;">40</div>
<div class="t r" style="left:406.0px;top:296.2px;">30</div>
<div class="t r" style="left:406.0px;top:324.4px;">20</div>
<div class="t r" style="left:406.0px;top:352.6px;">10</div>
<div class="t r" style="left:406.0px;top:380.8px;">0</div>
<div class="t c" style="left:757.8px;top:48.4px;">-600</div>
<div class="t c" style="left:757.8px;top:356.6px;">-600</div>
<div class="t r" style="left:464.6px;top:348.2px;">-600</div>
<div class="t " style="left:758.4px;top:348.2px;">-600</div>
<div class="t c" style="left:733.4px;top:48.4px;">-500</div>
<div class="t c" style="left:733.4px;top:356.6px;">-500</div>
<div class="t r" style="left:464.6px;top:323.9px;">-500</div>
<div class="t " style="left:758.4px;top:323.9px;">-500</div>
<div class="t c" style="left:709.0px;top:48.4px;">-400</div>
<div class="t c" style="left:709.0px;top:356.6px;">-400</div>
<div class="t r" style="left:464.6px;top:299.6px;">-400</div>
<div class="t " style="left:758.4px;top:299.6px;">-400</div>
<div class="t c" style="left:684.6px;top:48.4px;">-300</div>
<div class="t c" style="left:684.6px;top:356.6px;">-300</div>
<div class="t r" style="left:464.6px;top:275.3px;">-300</div>
<div class="t " style="left:758.4px;top:275.3px;">-300</div>
<div class="t c" style="left:660.3px;top:48.4px;">-200</div>
<div class="t c" style="left:660.3px;top:356.6px;">-200</div>
<div class="t r" style="left:464.6px;top:251.1px;">-200</div>
<div class="t " style="left:758.4px;top:251.1px;">-200</div>
<div class="t c" style="left:635.9px;top:48.4px;">-100</div>
<div class="t c" style="left:635.9px;top:356.6px;">-100</div>
<div class="t r" style="left:464.6px;top:226.8px;">-100</div>
<div class="t " style="left:758.4px;top:226.8px;">-100</div>
<div class="t c" style="left:611.5px;top:48.4px;">0</div>
<div class="t c" style="left:611.5px;top:356.6px;">0</div>
<div class="t r" style="left:464.6px;top:202.5px;">0</div>
<div class="t " style="left:758.4px;top:202.5px;">0</div>
<div class="t c" style="left:587.1px;top:48.4px;">100</div>
<div class="t c" style="left:587.1px;top:356.6px;">100</div>
<div class="t r" style="left:464.6px;top:178.2px;">100</div>
<div class="t " style="left:758.4px;top:178.2px;">100</div>
<div class="t c" style="left:562.7px;top:48.4px;">200</div>
<div class="t c" style="left:562.7px;top:356.6px;">200</div>
<div class="t r" style="left:464.6px;top:153.9px;">200</div>
<div class="t " style="left:758.4px;top:153.9px;">200</div>
<div class="t c" style="left:538.4px;top:48.4px;">300</div>
<div class="t c" style="left:538.4px;top:356.6px;">300</div>
<div class="t r" style="left:464.6px;top:129.6px;">300</div>
<div class="t " style="left:758.4px;top:129.6px;">300</div>
<div class="t c" style="left:514.0px;top:48.4px;">400</div>
<div class="t c" style="left:514.0px;top:356.6px;">400</div>
<div class="t r" style="left:464.6px;top:105.4px;">400</div>
<div class="t " style="left:758.4px;top:105.4px;">400</div>
<div class="t c" style="left:489.6px;top:48.4px;">500</div>
<div class="t c" style="left:489.6px;top:356.6px;">500</div>
<div class="t r" style="left:464.6px;top:81.1px;">500</div>
<div class="t " style="left:758.4px;top:81.1px;">500</div>
<div class="t c" style="left:465.2px;top:48.4px;">600</div>
<div class="t c" style="left:465.2px;top:356.6px;">600</div>
<div class="t r" style="left:464.6px;top:56.8px;">600</div>
<div class="t " style="left:758.4px;top:56.8px;">600</div>
<div class="t c" style="left:606.8px;top:365.6px;">X (millimeters)</div>
<div class="t" style="left:437.4px;top:211.4px;transform:translate(-50%,-50%) rotate(-90deg);font-size:7.7px">Y (millimeters)</div>
<div class="t c" style="left:606.0px;top:389.6px;">最小值:5.6755e-011, 最大值:110.17, 平均值:94.118</div>
<div class="t c" style="left:606.8px;top:398.6px;">总光通量:73.412 W, 光通量/发射光通量:0.1894, 717108 Incident 条光线</div>
<div class="t c" style="left:613px;top:187.6px;font-size:21.2px;line-height:26px;color:#e2421a">顶部</div>
<div class="t" style="left:338.5px;top:100px;font-family:'Liberation Serif',serif;font-size:7.2px">W/m²</div>
<div class="t" style="left:343.2px;top:109.2px;font-family:'Liberation Serif',serif;font-size:7px">112</div>
<div class="t" style="left:343.2px;top:121.4px;font-family:'Liberation Serif',serif;font-size:7px">110</div>
<div class="t" style="left:343.2px;top:133.5px;font-family:'Liberation Serif',serif;font-size:7px">108</div>
<div class="t" style="left:343.2px;top:145.7px;font-family:'Liberation Serif',serif;font-size:7px">106</div>
<div class="t" style="left:343.2px;top:157.8px;font-family:'Liberation Serif',serif;font-size:7px">104</div>
<div class="t" style="left:343.2px;top:170.0px;font-family:'Liberation Serif',serif;font-size:7px">102</div>
<div class="t" style="left:343.2px;top:182.1px;font-family:'Liberation Serif',serif;font-size:7px">100</div>
<div class="t" style="left:343.2px;top:194.2px;font-family:'Liberation Serif',serif;font-size:7px">98</div>
<div class="t" style="left:343.2px;top:206.4px;font-family:'Liberation Serif',serif;font-size:7px">96</div>
<div class="t" style="left:343.2px;top:218.6px;font-family:'Liberation Serif',serif;font-size:7px">94</div>
<div class="t" style="left:343.2px;top:230.7px;font-family:'Liberation Serif',serif;font-size:7px">92</div>
<div class="t" style="left:343.2px;top:242.9px;font-family:'Liberation Serif',serif;font-size:7px">90</div>
<div class="t" style="left:343.2px;top:255.0px;font-family:'Liberation Serif',serif;font-size:7px">88</div>
<div class="t" style="left:343.2px;top:267.2px;font-family:'Liberation Serif',serif;font-size:7px">86</div>
<div class="t" style="left:343.2px;top:279.3px;font-family:'Liberation Serif',serif;font-size:7px">84</div>
<div class="t" style="left:343.2px;top:291.5px;font-family:'Liberation Serif',serif;font-size:7px">82</div>
<div class="t" style="left:343.2px;top:303.6px;font-family:'Liberation Serif',serif;font-size:7px">80</div>
<div class="t" style="left:46.4px;top:345.6px;font-size:7.4px;color:#e03030">Z</div>
<div class="t" style="left:23.6px;top:365.4px;font-size:7.4px;color:#3535e0">X</div>
<svg width="790" height="412" viewBox="0 0 790 412" style="pointer-events:none">
<defs><mask id="wmcut" maskUnits="userSpaceOnUse" x="0" y="0" width="790" height="412"><rect x="0" y="0" width="790" height="412" fill="#fff"/>
<g transform="translate(254,224.5) rotate(-9.6)" font-family='"Liberation Sans","Noto Sans CJK SC",sans-serif' font-weight="bold" stroke-linejoin="round" fill="#000" stroke="#000">
<text x="0" y="0" font-size="32" stroke-width="2.0" textLength="178" lengthAdjust="spacingAndGlyphs">LONGPRO</text>
<text x="174" y="-17" font-size="9" stroke-width="0.2">®</text>
<text x="191" y="-5.5" font-size="31.5" stroke-width="0.3" textLength="74" lengthAdjust="spacingAndGlyphs">朗普</text>
<text x="38" y="20.5" font-size="17" font-weight="normal" stroke-width="0.4" textLength="186" lengthAdjust="spacing">科技之光 · 智造未来</text>
</g>
</mask></defs>
<g opacity="0.46" filter="url(#b05)"><g mask="url(#wmcut)">
<g transform="translate(254,224.5) rotate(-9.6)" font-family='"Liberation Sans","Noto Sans CJK SC",sans-serif' font-weight="bold" stroke-linejoin="round" fill="#fff" stroke="#fff">
<text x="0" y="0" font-size="32" stroke-width="5.6" textLength="178" lengthAdjust="spacingAndGlyphs">LONGPRO</text>
<text x="174" y="-17" font-size="9" stroke-width="1.2">®</text>
<text x="191" y="-5.5" font-size="31.5" stroke-width="4.2" textLength="74" lengthAdjust="spacingAndGlyphs">朗普</text>
<text x="38" y="20.5" font-size="17" font-weight="normal" stroke-width="3.3" textLength="186" lengthAdjust="spacing">科技之光 · 智造未来</text>
</g>
</g></g>
<g opacity="0.3" filter="url(#b05)">
<g transform="translate(254,224.5) rotate(-9.6)" font-family='"Liberation Sans","Noto Sans CJK SC",sans-serif' font-weight="bold" stroke-linejoin="round" fill="#5a5a5a" stroke="#5a5a5a">
<text x="0" y="0" font-size="32" stroke-width="2.0" textLength="178" lengthAdjust="spacingAndGlyphs">LONGPRO</text>
<text x="174" y="-17" font-size="9" stroke-width="0.2">®</text>
<text x="191" y="-5.5" font-size="31.5" stroke-width="0.3" textLength="74" lengthAdjust="spacingAndGlyphs">朗普</text>
<text x="38" y="20.5" font-size="17" font-weight="normal" stroke-width="0.4" textLength="186" lengthAdjust="spacing">科技之光 · 智造未来</text>
</g>
</g>
</svg>
</div></body></html>
